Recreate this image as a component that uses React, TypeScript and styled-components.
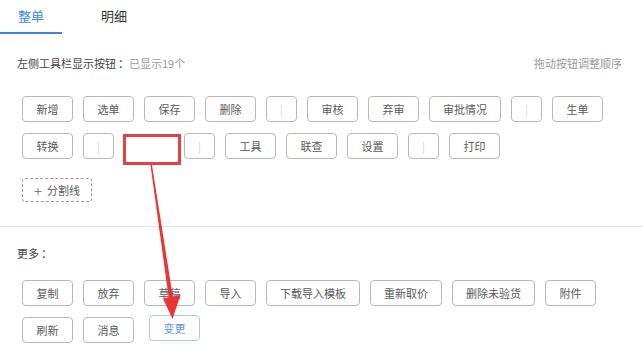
import React, { FC } from 'react';
import styled, { createGlobalStyle } from 'styled-components';

const GlobalStyle = createGlobalStyle`
	html, body {
		margin: 0;
		padding: 0;
		background: #fff;
	}
	* {
		box-sizing: border-box;
	}
	body {
		font-family: "Noto Sans CJK SC", "Noto Sans", "Liberation Sans", sans-serif;
	}
`;

const Page = styled.div`
	position: relative;
	width: 643px;
	height: 347px;
	overflow: hidden;
	background: #fff;
`;
const Tabs = styled.div`
	display: flex;
	gap: 21px;
	height: 34px;
`;
const Tab = styled.div<{ $active?: boolean }>`
	padding: 0 18px;
	height: 34px;
	font-size: 13px;
	line-height: 32px;
	color: ${(p) => (p.$active ? '#3d8ae6' : '#333')};
	box-shadow: ${(p) => (p.$active ? 'inset 0 -2px 0 #3d86dc' : 'none')};
`;
const Header = styled.div`
	display: flex;
	justify-content: space-between;
	align-items: center;
	margin-top: 20px;
	padding: 0 21px 0 17px;
	height: 18px;
	font-size: 11px;
	color: #444;
`;
const Muted = styled.span`
	color: #9a9a9a;
`;
const Colon = styled.span`
	display: inline-block;
	width: 13px;
	padding-left: 2px;
`;
const ButtonGrid = styled.div<{ $top: number }>`
	display: flex;
	flex-wrap: wrap;
	gap: 11px 10px;
	margin-top: ${(p) => p.$top}px;
	padding: 0 21px 0 22px;
`;
const ToolButton = styled.div<{ $dragging?: boolean }>`
	position: relative;
	height: 26px;
	min-width: 51px;
	padding: 0 13px;
	border: 1px solid ${(p) => (p.$dragging ? '#a9c9f0' : '#b8b8b8')};
	border-radius: 4px;
	font-size: 11px;
	line-height: 24px;
	text-align: center;
	color: ${(p) => (p.$dragging ? '#5d9be3' : '#5a5a5a')};
	background: #fff;
	white-space: nowrap;
	transform: ${(p) => (p.$dragging ? 'translate(5px, -2px)' : 'none')};
`;
const Separator = styled(ToolButton)`
	min-width: 0;
	color: #d4d4d4;
`;
const Placeholder = styled.div`
	position: relative;
	width: 50px;
	height: 26px;
`;
const Highlight = styled.div`
	position: absolute;
	left: -1px;
	top: 1px;
	width: 58px;
	height: 31px;
	border: 3px solid #e8403f;
`;
const AddButton = styled.div`
	display: inline-flex;
	align-items: center;
	gap: 5px;
	margin: 19px 0 0 22px;
	height: 24px;
	padding: 0 11px;
	border: 1px dashed #9a9a9a;
	border-radius: 3px;
	font-size: 11px;
	color: #5a5a5a;
`;
const Plus = styled.span`
	font-size: 15px;
	font-weight: 300;
	line-height: 1;
	color: #666;
`;
const Divider = styled.div`
	margin-top: 24px;
	height: 1px;
	background: #e6e6e6;
`;
const SectionTitle = styled.div`
	margin-top: 17px;
	padding-left: 17px;
	height: 18px;
	line-height: 18px;
	font-size: 11px;
	color: #444;
`;
const Overlay = styled.svg`
	position: absolute;
	left: 0;
	top: 0;
	pointer-events: none;
`;

type Item = string | null;

const shown: Item[] = [
	'新增', '选单', '保存', '删除', '|', '审核', '弃审', '审批情况', '|', '生单',
	'转换', '|', null, '|', '工具', '联查', '设置', '|', '打印',
];
const more: string[] = [
	'复制', '放弃', '草稿', '导入', '下载导入模板', '重新取价', '删除未验货', '附件', '刷新', '消息',
];

const App: FC = () => {
	return (
		<Page>
			<GlobalStyle />
			<Tabs>
				<Tab $active>整单</Tab>
				<Tab>明细</Tab>
			</Tabs>
			<Header>
				<span>
					左侧工具栏显示按钮<Colon>：</Colon>
					<Muted>已显示19个</Muted>
				</span>
				<Muted>拖动按钮调整顺序</Muted>
			</Header>
			<ButtonGrid $top={24}>
				{shown.map((el, i) =>
					el === null ? (
						<Placeholder key={i}>
							<Highlight />
						</Placeholder>
					) : el === '|' ? (
						<Separator key={i}>|</Separator>
					) : (
						<ToolButton key={i}>{el}</ToolButton>
					)
				)}
			</ButtonGrid>
			<AddButton>
				<Plus>+</Plus> 分割线
			</AddButton>
			<Divider />
			<SectionTitle>
				更多<Colon>：</Colon>
			</SectionTitle>
			<ButtonGrid $top={18}>
				{more.map((el, i) => (
					<ToolButton key={i}>{el}</ToolButton>
				))}
				<ToolButton $dragging>变更</ToolButton>
			</ButtonGrid>
			<Overlay width="643" height="347" viewBox="0 0 643 347">
				<polygon
					fill="#ec3434"
					points="150.5,165 152,165 172.8,296.5 180.5,295 172.5,319 163,298.5 168.6,297.2"
				/>
			</Overlay>
		</Page>
	);
};

export default App;
